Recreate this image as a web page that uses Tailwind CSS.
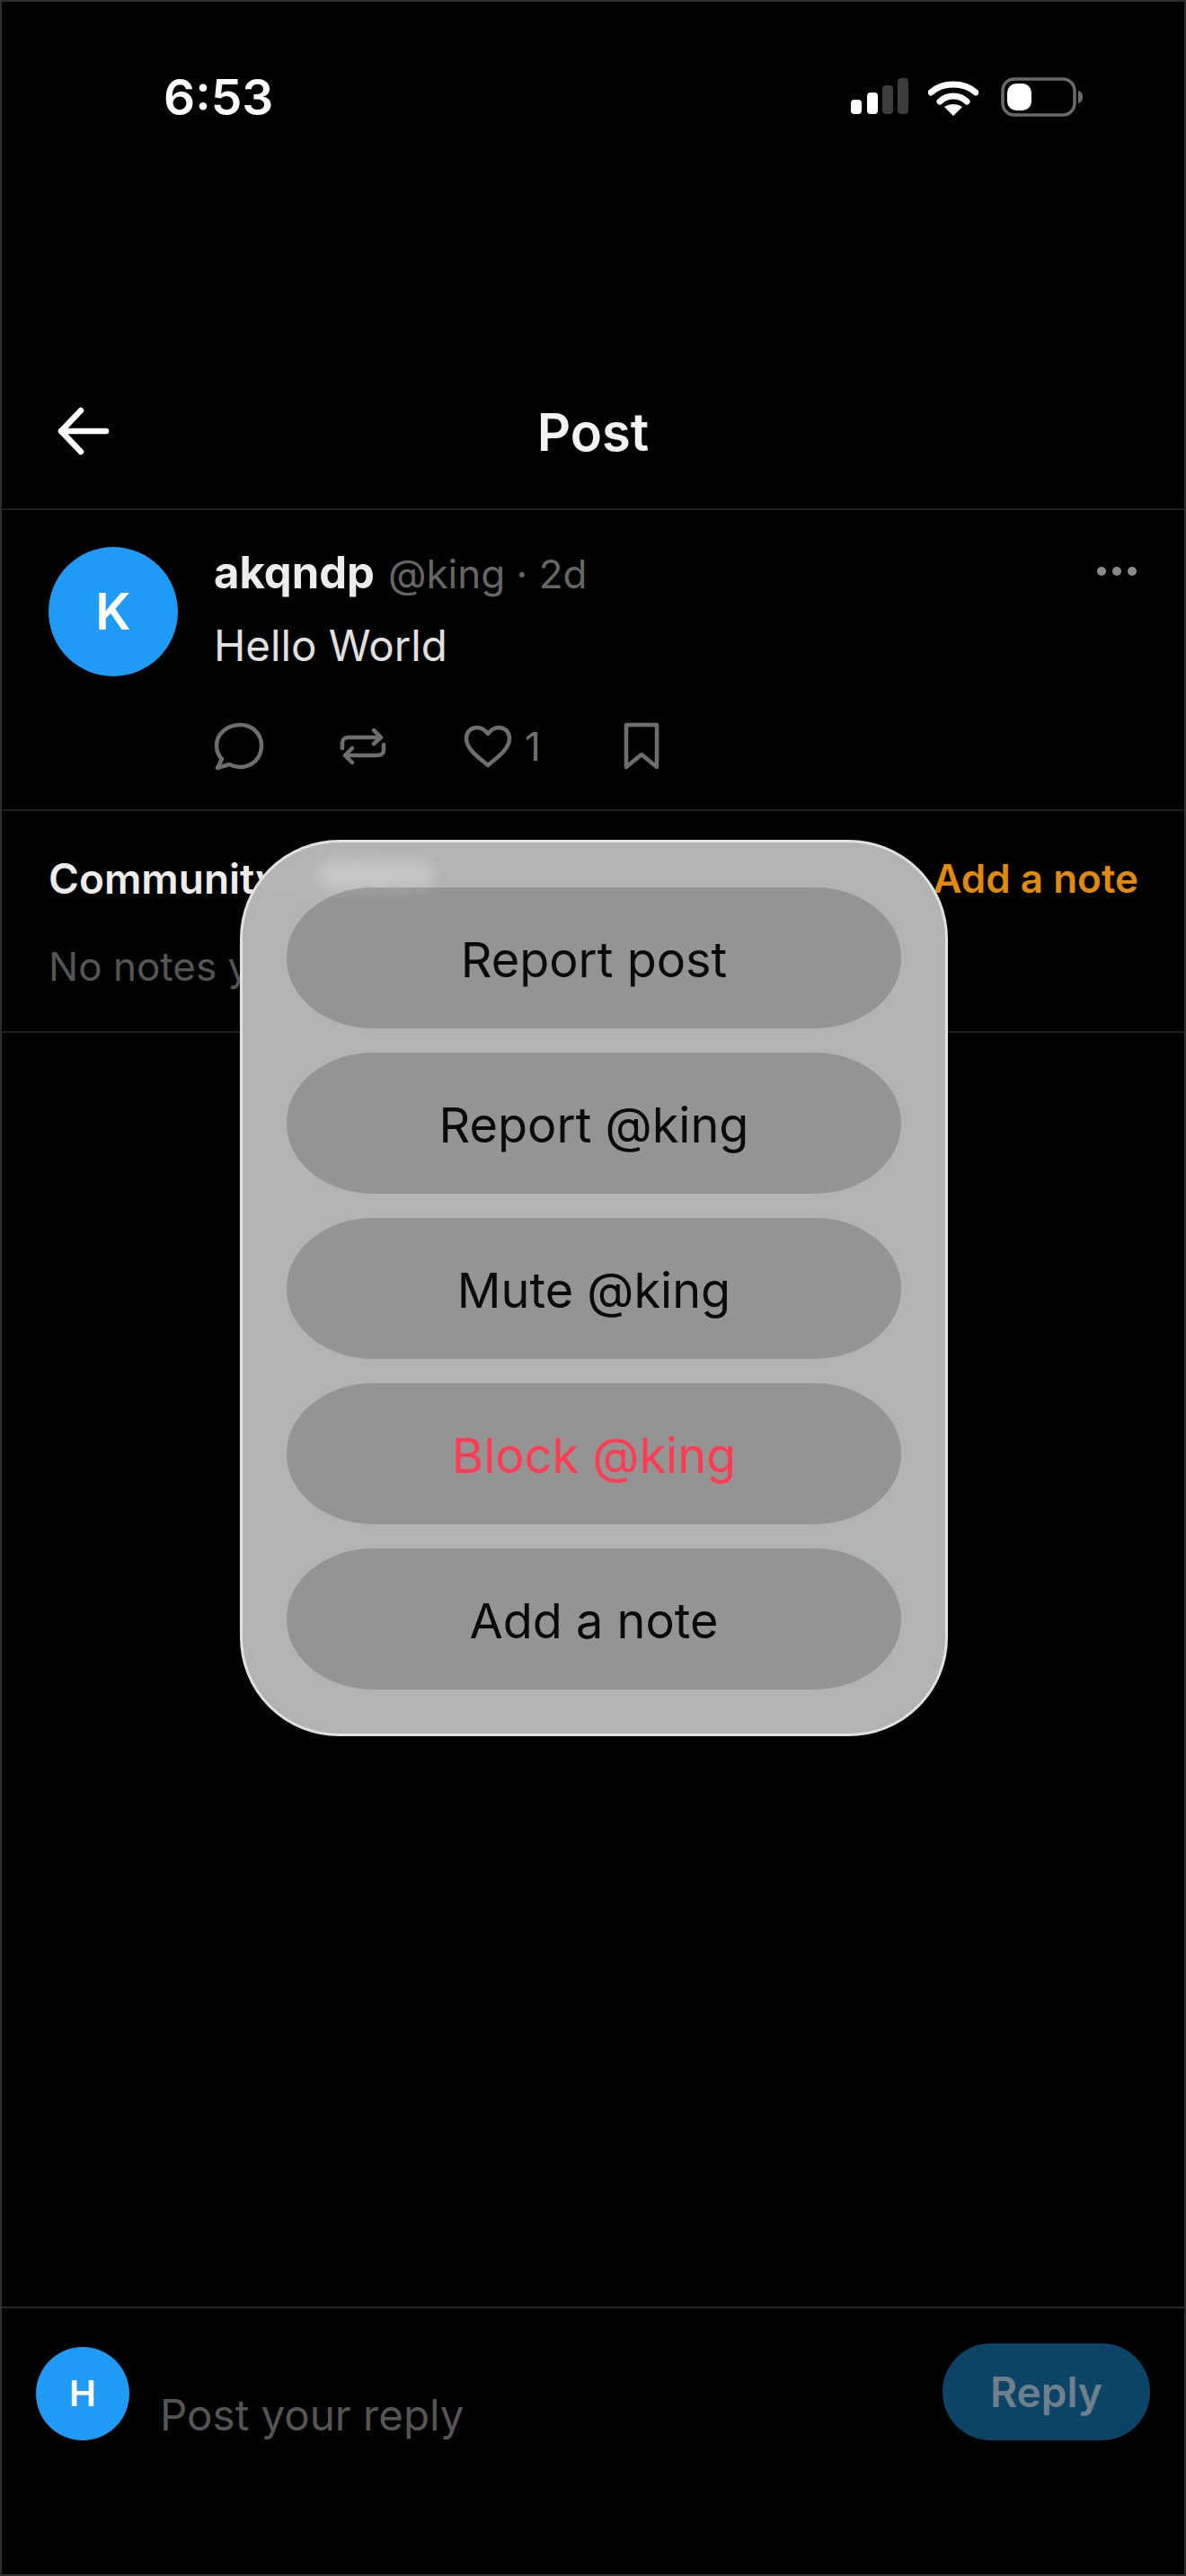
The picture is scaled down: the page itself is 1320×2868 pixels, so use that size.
<!DOCTYPE html>
<html>
<head>
<meta charset="utf-8">
<script src="https://cdn.jsdelivr.net/npm/@tailwindcss/browser@4"></script>
</head>
<body class="bg-black">
<div class="relative w-[1320px] h-[2868px] bg-black overflow-hidden border-x-2 border-y-2 border-[#2e2e2e] blur-[0.6px] font-['Inter','Liberation_Sans',sans-serif] flex flex-col">
  <!-- status bar + nav -->
  <div class="h-[566px] border-b-2 border-[#222222] flex flex-col shrink-0">
    <div class="h-[128px] pt-[76px] flex items-start justify-between shrink-0">
      <div class="ml-[180px] text-[55px] leading-[60px] font-semibold text-white">6:53</div>
      <div class="mr-[112px] flex items-end gap-[22px] -mt-[6px] h-[60px]">
        <svg width="68" height="42" viewBox="0 0 68 42" class="mb-[3px] mr-[-1px]">
          <rect x="3" y="24" width="12" height="16" rx="4" fill="#fff"/>
          <rect x="21" y="16" width="12" height="24" rx="4" fill="#fff"/>
          <rect x="38" y="8" width="12" height="32" rx="4" fill="#3c3c3c"/>
          <rect x="55" y="0" width="12" height="40" rx="4" fill="#3c3c3c"/>
        </svg>
        <svg width="56" height="42" viewBox="0 0 56 42" class="mb-[3px] mr-[3px]">
          <path d="M3 16C16 4 40 4 53 16" fill="none" stroke="#fff" stroke-width="7" stroke-linecap="round"/>
          <path d="M13 26C21 18 35 18 43 26" fill="none" stroke="#fff" stroke-width="7" stroke-linecap="round"/>
          <path d="M18 32C24 28 32 28 38 32L28 42Z" fill="#fff"/>
        </svg>
        <svg width="92" height="44" viewBox="0 0 92 44" class="mb-[2px]">
          <rect x="2" y="2" width="80" height="40" rx="13" fill="none" stroke="#6a6a6a" stroke-width="3.5"/>
          <rect x="7" y="7" width="27" height="30" rx="10" fill="#fff"/>
          <path d="M86 15C90 16 91 19 91 22C91 25 90 28 86 29Z" fill="#6a6a6a"/>
        </svg>
      </div>
    </div>
    <div class="relative flex-1 flex items-center justify-center">
      <svg class="absolute left-[62px] top-[323px]" width="58" height="54" viewBox="0 0 58 54" fill="none" stroke="#fff" stroke-width="6.5" stroke-linecap="round" stroke-linejoin="round"><path d="M54 27H4M26 4L4 27L26 50"/></svg>
      <div class="absolute left-0 right-0 top-[318px] text-center text-[58px] leading-[66px] font-semibold text-[#f2f2f2]">Post</div>
    </div>
  </div>
  <!-- post -->
  <div class="h-[335px] border-b-2 border-[#1f1f1f] flex pl-[52px] pt-[41px] shrink-0 relative">
    <div class="w-[144px] h-[144px] rounded-full bg-[#1f9bf5] flex items-center justify-center text-white text-[56px] font-semibold shrink-0">K</div>
    <div class="ml-[40px]">
      <div class="flex items-baseline text-[48px] leading-[58px] mt-[0px]">
        <span class="font-bold text-[49px] text-[#ececec]">akqndp</span>
        <span class="ml-[15px] text-[#666666] text-[44px]">@king · 2d</span>
      </div>
      <div class="text-[47.5px] leading-[58px] mt-[22px] text-[#e0e0e0]">Hello World</div>
      <div class="flex items-center mt-[56px] h-[54px] text-[#6e6e6e]">
        <svg width="56" height="54" viewBox="0 0 56 54" fill="none" stroke="currentColor" stroke-width="4.5" stroke-linejoin="round"><path d="M29 3C15 3 3 13 3 26C3 32 5 37 9 41L4 51L17 47C21 49 25 50 29 50C43 50 53 40 53 26C53 13 43 3 29 3Z"/></svg>
        <svg class="ml-[84px]" width="52" height="40" viewBox="0 0 52 40" fill="none" stroke="currentColor" stroke-width="4.5" stroke-linecap="round" stroke-linejoin="round"><path d="M3 22V16C3 12 6 10 10 10H46M38 2L46 10L38 17M49 18V24C49 28 46 30 42 30H6M14 22L6 30L14 38"/></svg>
        <svg class="ml-[86px]" width="54" height="48" viewBox="0 0 54 48" fill="none" stroke="currentColor" stroke-width="4.5" stroke-linejoin="round"><path d="M27 45C16 36 3 27 3 15C3 8 8 3 15 3C20 3 24 6 27 10C30 6 34 3 39 3C46 3 51 8 51 15C51 27 38 36 27 45Z"/></svg>
        <span class="ml-[14px] text-[44px] leading-[54px] w-[22px]">1</span>
        <svg class="ml-[87px]" width="42" height="54" viewBox="0 0 42 54" fill="none" stroke="currentColor" stroke-width="4.5" stroke-linejoin="round"><path d="M4 3H38V50L21 36L4 50Z"/></svg>
      </div>
    </div>
    <svg class="absolute left-[1218px] top-[62px]" width="46" height="12" viewBox="0 0 46 12" fill="#8a8a8a"><circle cx="6" cy="6" r="5"/><circle cx="23" cy="6" r="5"/><circle cx="40" cy="6" r="5"/></svg>
  </div>
  <!-- community notes -->
  <div class="h-[247px] border-b-2 border-[#1f1f1f] px-[52px] pt-[47px] shrink-0">
    <div class="flex justify-between items-center h-[56px]">
      <span class="text-[46px] font-semibold text-[#ececec]">Community Notes</span>
      <span class="text-[44px] font-semibold text-[#e08a0e] -mr-[1px]">Add a note</span>
    </div>
    <div class="mt-[43px] text-[44px] leading-[54px] text-[#555555]">No notes yet. Be the first to add one</div>
  </div>
  <div class="flex-1"></div>
  <!-- reply bar -->
  <div class="h-[298px] border-t-2 border-[#262626] relative shrink-0 flex items-start pl-[38px] pt-[43px]">
    <div class="w-[104px] h-[104px] rounded-full bg-[#1f9bf5] flex items-center justify-center text-white text-[40px] font-semibold shrink-0">H</div>
    <div class="ml-[34px] mt-[47px] text-[47.5px] leading-[58px] text-[#555555]">Post your reply</div>
    <div class="ml-auto mr-[38px] -mt-[4px] w-[231px] h-[108px] rounded-full bg-[#0c4468] flex items-center justify-center text-[46px] font-semibold text-[#6f808c]">Reply</div>
  </div>
  <!-- modal -->
  <div class="absolute left-[265px] top-[933px] w-[788px] h-[998px] rounded-[110px] border-[3px] border-[#e0e2de] bg-[#bcbeba]/95 backdrop-blur-xl flex flex-col gap-[27px] px-[49px] pt-[50px]">
    <div class="absolute left-[84px] top-[20px] w-[130px] h-[32px] rounded-[16px] bg-white/25 blur-[8px]"></div>
    <div class="relative h-[157px] rounded-[96px/78px] bg-black/[0.17] flex items-center justify-center pt-[3px] text-[54px] text-[#0a0a0a]">Report post</div>
    <div class="relative h-[157px] rounded-[96px/78px] bg-black/[0.17] flex items-center justify-center pt-[3px] text-[54px] text-[#0a0a0a]">Report @king</div>
    <div class="relative h-[157px] rounded-[96px/78px] bg-black/[0.17] flex items-center justify-center pt-[3px] text-[54px] text-[#0a0a0a]">Mute @king</div>
    <div class="relative h-[157px] rounded-[96px/78px] bg-black/[0.17] flex items-center justify-center pt-[3px] text-[54px] text-[#ff3a52]">Block @king</div>
    <div class="relative h-[157px] rounded-[96px/78px] bg-black/[0.17] flex items-center justify-center pt-[3px] text-[54px] text-[#0a0a0a]">Add a note</div>
  </div>
</div>
</body>
</html>
